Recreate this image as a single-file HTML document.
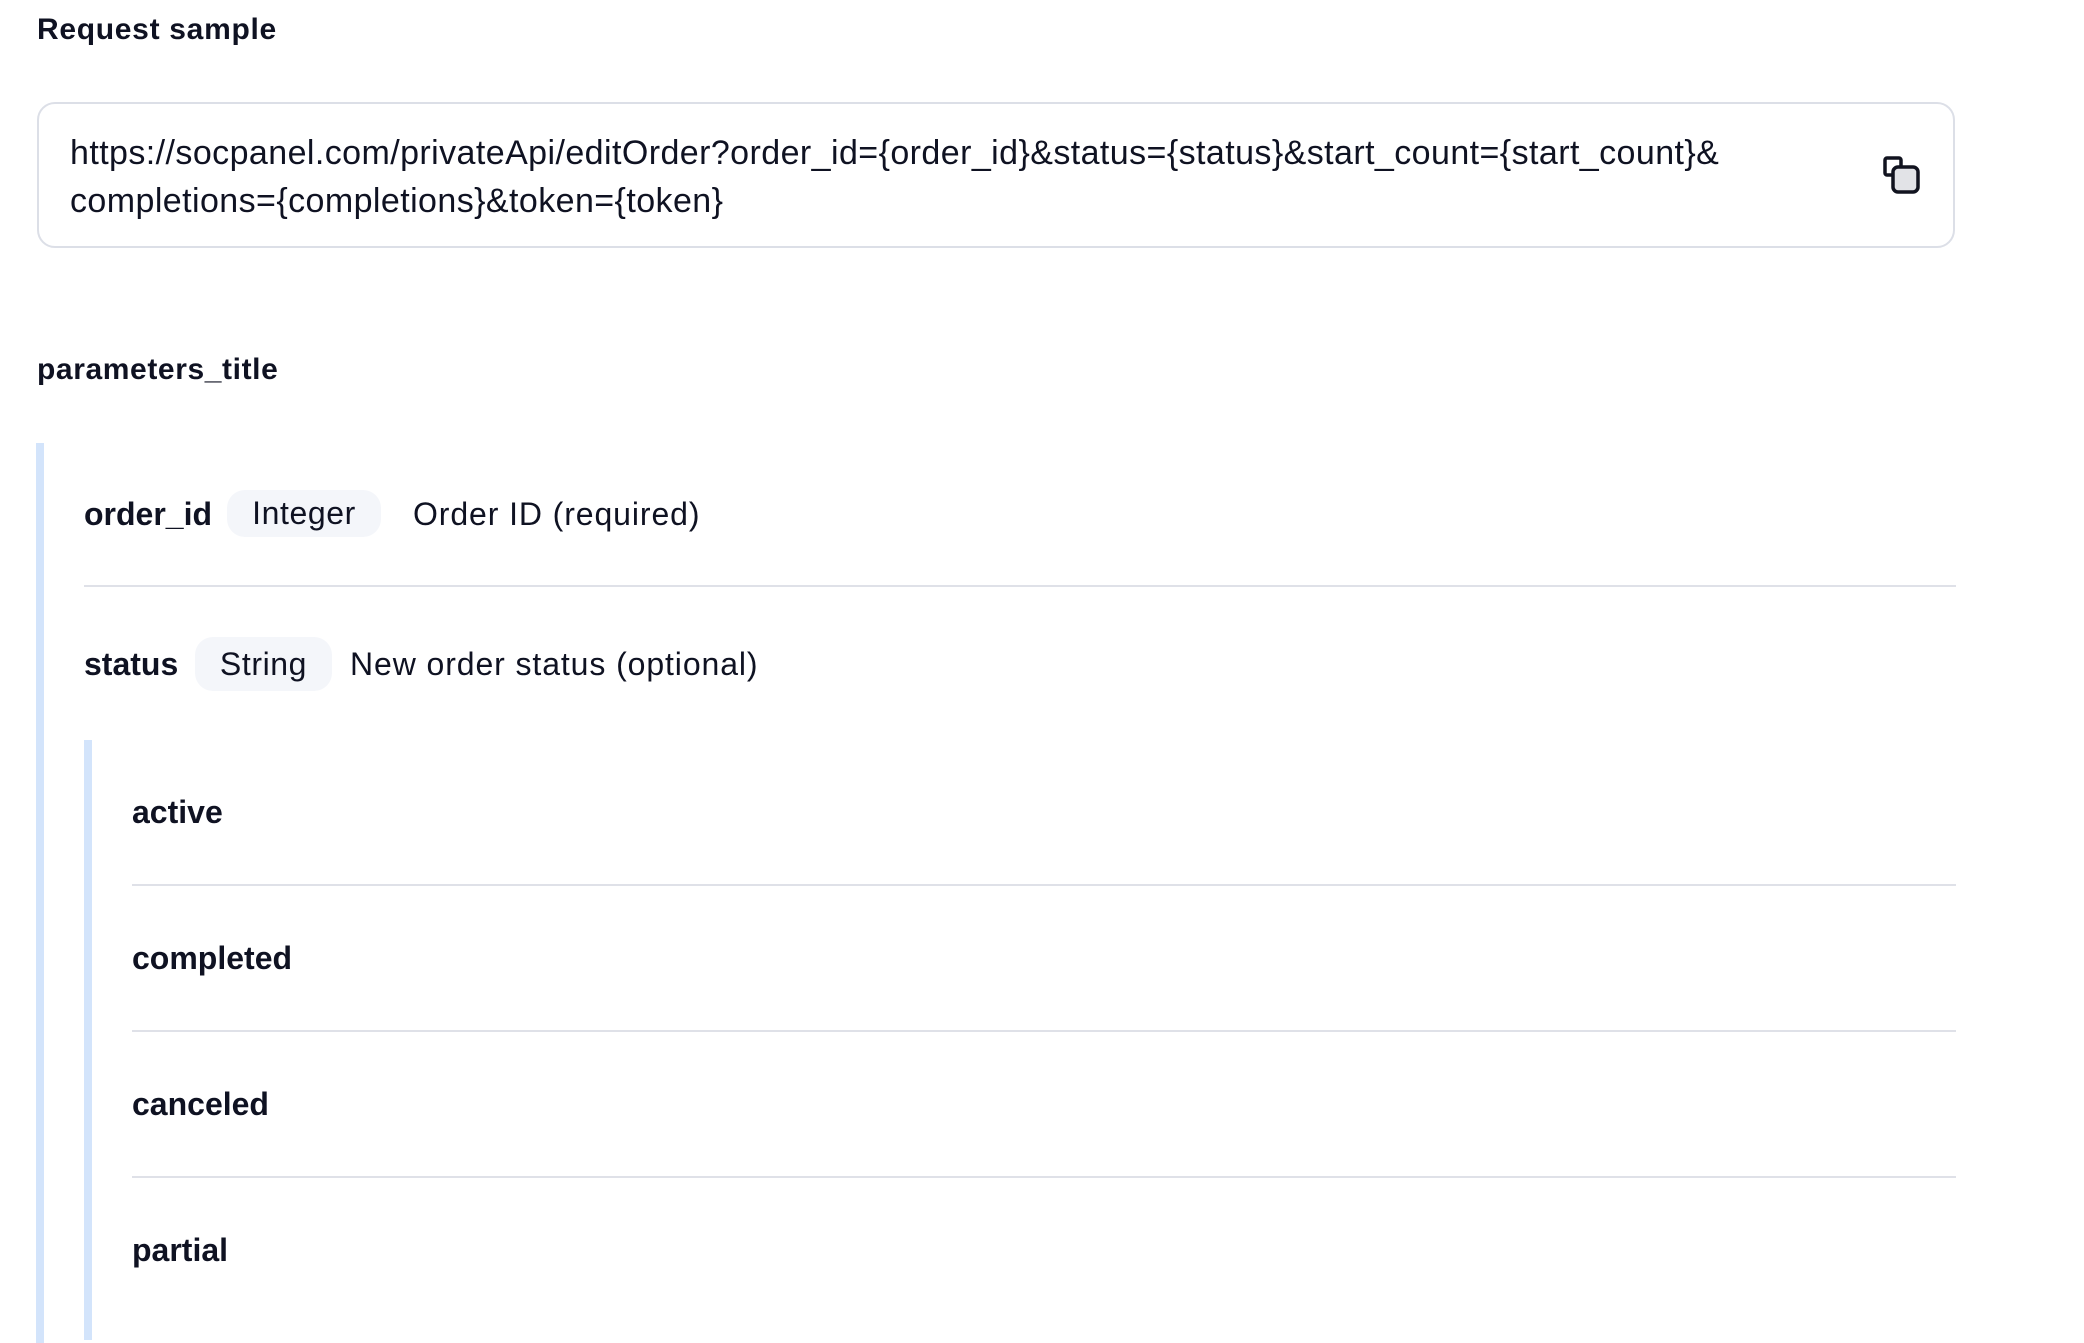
<!DOCTYPE html>
<html><head><style>
*{margin:0;padding:0;box-sizing:border-box}
body{width:2084px;height:1318px;background:#fff;position:relative;overflow:hidden;font-family:"Liberation Sans",sans-serif;color:#0f1222}
.a{position:absolute;white-space:nowrap}
.b{font-weight:700;font-size:32px;line-height:36px}
.t{font-size:32px;line-height:36px;letter-spacing:0.9px}
.chip{position:absolute;background:#f4f6fa;border-radius:18px;font-size:32px;letter-spacing:0.6px;display:flex;align-items:center;justify-content:center}
.hr{position:absolute;height:2px;background:#dfe1e8;right:128px}
</style></head><body>
<div class="a" style="left:37px;top:12px;font-size:30px;line-height:36px;font-weight:700;letter-spacing:0.7px">Request sample</div>
<div class="a" style="left:37px;top:102px;width:1918px;height:146px;border:2px solid #dcdfe7;border-radius:18px"></div>
<div class="a" style="left:70px;top:129px;font-size:34px;line-height:48px;letter-spacing:0.42px">https://socpanel.com/privateApi/editOrder?order_id={order_id}&amp;status={status}&amp;start_count={start_count}&amp;<br>completions={completions}&amp;token={token}</div>
<svg class="a" style="left:1880px;top:154px" width="44" height="44" viewBox="0 0 44 44"><path d="M14 21 H7 a2 2 0 0 1 -2 -2 V6 a2 2 0 0 1 2 -2 H19 a2 2 0 0 1 2 2 V12" fill="none" stroke="#11131f" stroke-width="3.5" stroke-linecap="round"/><rect x="13" y="13" width="25" height="25" rx="5" fill="#e2e3e7" stroke="#11131f" stroke-width="3.5"/></svg>
<div class="a" style="left:37px;top:352px;font-size:30px;line-height:36px;font-weight:700;letter-spacing:0.6px">parameters_title</div>
<div class="a" style="left:36px;top:443px;width:8px;height:900px;background:#d3e4fb"></div>
<div class="a b" style="left:84px;top:496px">order_id</div>
<div class="chip" style="left:227px;top:490px;width:154px;height:47px">Integer</div>
<div class="a t" style="left:413px;top:496px">Order ID (required)</div>
<div class="hr" style="left:84px;top:585px"></div>
<div class="a b" style="left:84px;top:646px">status</div>
<div class="chip" style="left:195px;top:637px;width:137px;height:54px">String</div>
<div class="a t" style="left:350px;top:646px">New order status (optional)</div>
<div class="a" style="left:84px;top:740px;width:8px;height:600px;background:#d3e4fb"></div>
<div class="a b" style="left:132px;top:794px">active</div>
<div class="hr" style="left:132px;top:884px"></div>
<div class="a b" style="left:132px;top:940px">completed</div>
<div class="hr" style="left:132px;top:1030px"></div>
<div class="a b" style="left:132px;top:1086px">canceled</div>
<div class="hr" style="left:132px;top:1176px"></div>
<div class="a b" style="left:132px;top:1232px">partial</div>
</body></html>
